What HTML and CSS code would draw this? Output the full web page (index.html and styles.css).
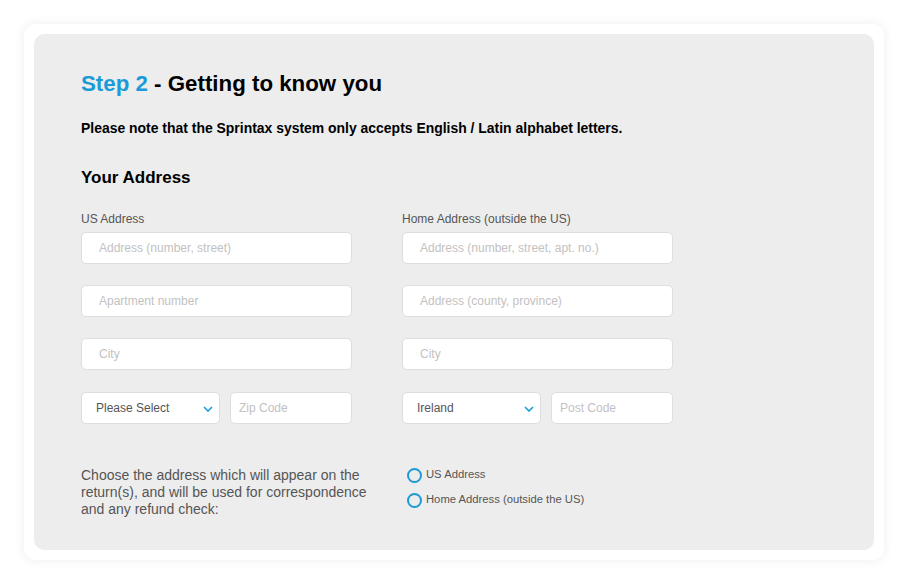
FILE: index.html
```html
<!DOCTYPE html>
<html>
<head>
<meta charset="utf-8">
<link rel="stylesheet" href="styles.css">
</head>
<body>
<div class="frame">
  <div class="panel">
    <h1 class="title"><span class="step">Step 2</span> - Getting to know you</h1>
    <p class="note">Please note that the Sprintax system only accepts English / Latin alphabet letters.</p>
    <h2 class="section">Your Address</h2>
    <div class="columns">
      <div class="col">
        <div class="label">US Address</div>
        <div class="field"><span class="ph">Address (number, street)</span></div>
        <div class="field"><span class="ph">Apartment number</span></div>
        <div class="field"><span class="ph">City</span></div>
        <div class="row">
          <div class="field select"><span class="val">Please Select</span>
            <svg class="chev" width="10" height="6" viewBox="0 0 10 6"><path d="M1 1 L5 5 L9 1" fill="none" stroke="#1b9bd7" stroke-width="1.6"/></svg>
          </div>
          <div class="field small"><span class="ph">Zip Code</span></div>
        </div>
      </div>
      <div class="col">
        <div class="label">Home Address (outside the US)</div>
        <div class="field"><span class="ph">Address (number, street, apt. no.)</span></div>
        <div class="field"><span class="ph">Address (county, province)</span></div>
        <div class="field"><span class="ph">City</span></div>
        <div class="row">
          <div class="field select"><span class="val">Ireland</span>
            <svg class="chev" width="10" height="6" viewBox="0 0 10 6"><path d="M1 1 L5 5 L9 1" fill="none" stroke="#1b9bd7" stroke-width="1.6"/></svg>
          </div>
          <div class="field small"><span class="ph">Post Code</span></div>
        </div>
      </div>
    </div>
    <div class="choose">
      <p class="choose-text">Choose the address which will appear on the return(s), and will be used for correspondence and any refund check:</p>
      <div class="radios">
        <div class="radio"><span class="circle"></span><span class="rlabel">US Address</span></div>
        <div class="radio"><span class="circle"></span><span class="rlabel">Home Address (outside the US)</span></div>
      </div>
    </div>
  </div>
</div>
</body>
</html>
```
FILE: styles.css
```css
* { box-sizing: border-box; }
html, body { margin: 0; padding: 0; background: #ffffff; }
body { font-family: "Liberation Sans", Arial, sans-serif; }
.frame {
  margin: 24px;
  width: 860px;
  height: 536px;
  background: #ffffff;
  border-radius: 12px;
  box-shadow: 0 0 10px 2px rgba(0,0,0,0.05);
  padding: 10px;
}
.panel {
  background: #ededed;
  border-radius: 10px;
  height: 516px;
  padding: 37px 47px 0 47px;
}
.title {
  margin: 0;
  font-size: 22.3px;
  line-height: 26px;
  font-weight: bold;
  color: #000;
}
.step { color: #1b9bd7; }
.note {
  margin: 23px 0 0 0;
  font-size: 13.95px;
  line-height: 16px;
  font-weight: bold;
  color: #000;
}
.section {
  margin: 32px 0 0 0;
  font-size: 17px;
  line-height: 20px;
  font-weight: bold;
  color: #000;
}
.columns {
  display: flex;
  gap: 50px;
  margin-top: 24px;
}
.col { width: 271px; display: flex; flex-direction: column; }
.label {
  font-size: 12px;
  line-height: 14px;
  color: #555;
  margin-bottom: 6px;
}
.field {
  height: 32px;
  background: #fff;
  border: 1px solid #dedede;
  border-radius: 5px;
  display: flex;
  align-items: center;
  padding-left: 17px;
  margin-bottom: 21px;
  font-size: 12px;
}
.ph { color: #c2c2c2; }
.val { color: #555; }
.row { display: flex; gap: 10px; margin-top: 1px; }
.select { width: 139px; justify-content: space-between; padding-left: 14px; padding-right: 6px; }
.small { width: 122px; padding-left: 8px; }
.chev { display: block; margin-top: 1px; }
.choose { display: flex; margin-top: 22px; }
.choose-text {
  margin: 0;
  width: 300px;
  font-size: 14px;
  line-height: 17px;
  color: #555;
}
.radios { margin-left: 26px; display: flex; flex-direction: column; gap: 6px; margin-top: -3px; }
.radio { display: flex; align-items: center; }
.circle {
  width: 15px; height: 15px;
  border: 2px solid #1b9bd7;
  border-radius: 50%;
  margin-right: 4px;
  margin-top: 4px;
}
.rlabel { font-size: 11.25px; line-height: 16px; color: #555; }
```
